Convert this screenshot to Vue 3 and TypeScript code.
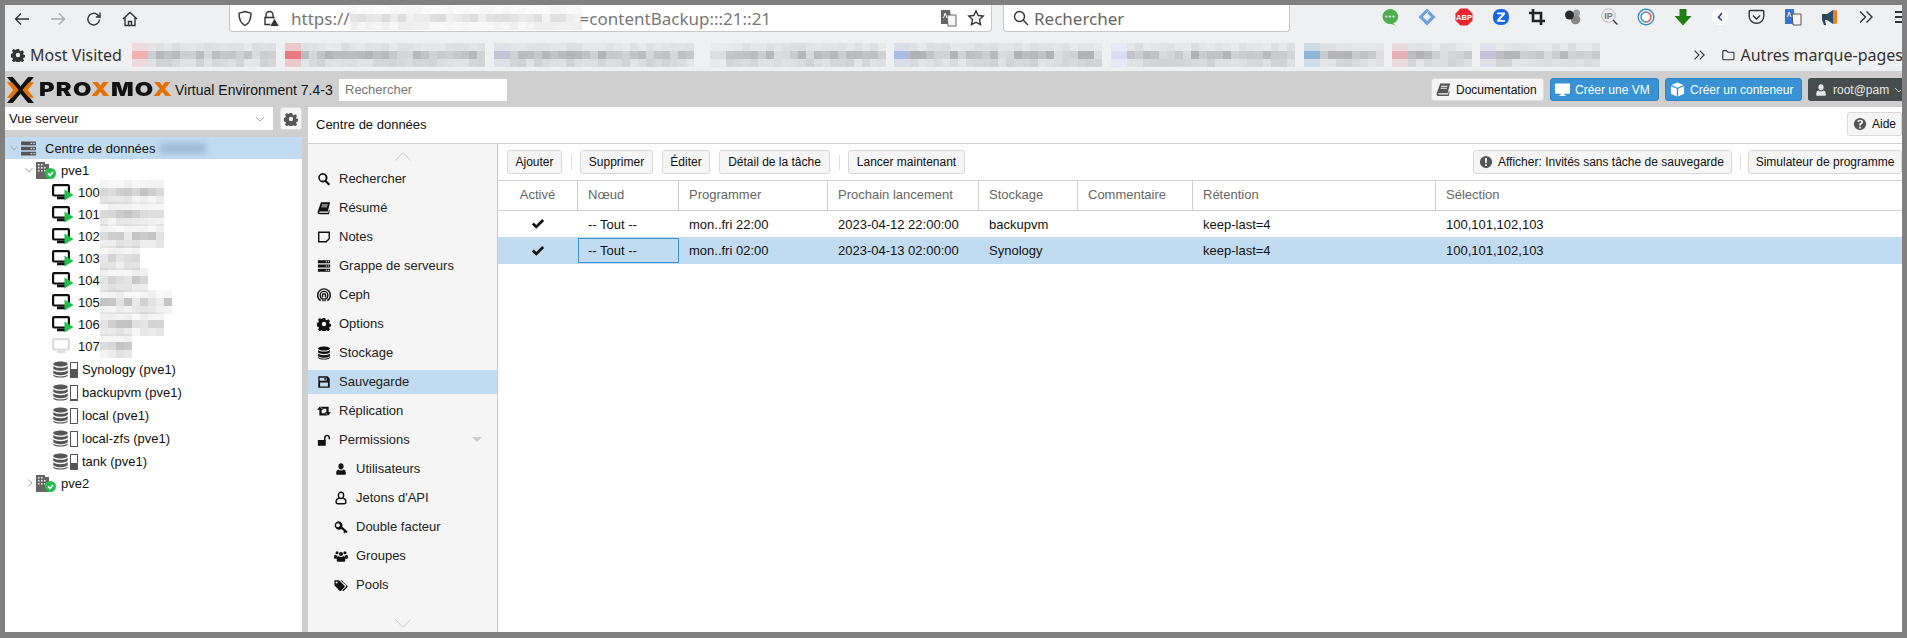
<script setup lang="ts">
import { h } from "vue";

type IconDef = { f?: string; s?: string };

const icons: Record<string, IconDef> = {
  search: { f: "M6.5 1a5.5 5.5 0 0 1 4.4 8.8l4 4-1.7 1.7-4-4A5.5 5.5 0 1 1 6.5 1zm0 2.2a3.3 3.3 0 1 0 0 6.6 3.3 3.3 0 0 0 0-6.6z" },
  book: { f: "M4.5 1.5H15l-2.6 10.6H3.2c-1 0-1 1.2 0 1.2h9.6l.9-3.4 1 .6L13.5 15H2.8C1 15 .3 13.4.9 11.6zM5.5 4v1H12l.3-1zM5 6.2v1h6.4l.3-1z" },
  note: { s: "M2 2.5h12v7.5l-3.5 3.5H2z" },
  server: { f: "M1 1.5h14v3.4H1zM10 2.6v1.2h1.4V2.6zm2.4 0v1.2h1.4V2.6zM1 6.3h14v3.4H1zM10 7.4v1.2h1.4V7.4zm2.4 0v1.2h1.4V7.4zM1 11.1h14v3.4H1zM10 12.2v1.2h1.4v-1.2zm2.4 0v1.2h1.4v-1.2z" },
  ceph: { s: "M4.2 14.500C2 13.200.8 10.900.8 8.200a7.200 7.200 0 0 1 14.400 0c0 2.700-1.200 5-3.400 6.300M5.600 12.500C4.300 11.500 3.600 10 3.600 8.300a4.400 4.400 0 0 1 8.800 0c0 1.700-.7 3.200-2 4.200M6.800 10.500C6.300 10 6.200 9 6.200 8.400a1.800 1.800 0 0 1 3.600 0c0 .6-.1 1.600-.6 2.100M6.800 15V11.500M9.200 15V11.500" },
  cog: { f: "M6.600 1h2.800l.4 2 1.400.6 1.700-1.100 2 2-1.100 1.700.6 1.400 2 .4v2.800l-2 .4-.6 1.400 1.100 1.700-2 2-1.700-1.100-1.400.6-.4 2H6.600l-.4-2-1.400-.6-1.700 1.100-2-2 1.100-1.700-.6-1.400-2-.4V6.600l2-.4.6-1.400-1.100-1.700 2-2 1.700 1.100 1.400-.6zM8 5.500a2.500 2.500 0 1 0 0 5 2.500 2.500 0 0 0 0-5z" },
  db: { f: "M8 .5c3.600 0 6.800 1 6.800 2.300S11.600 5.200 8 5.200 1.200 4.100 1.200 2.800 4.400.5 8 .5zM1.200 4.600c1 1.100 3.900 1.800 6.800 1.800s5.800-.7 6.800-1.800v2.300c0 1.200-3.200 2.300-6.800 2.300S1.200 8.100 1.200 6.900zM1.200 8.700c1 1.100 3.900 1.800 6.800 1.800s5.800-.7 6.800-1.800V11c0 1.200-3.200 2.300-6.800 2.300S1.200 12.200 1.200 11zM1.200 12.700c1 1.100 3.900 1.800 6.800 1.800s5.800-.7 6.800-1.800v.6c0 1.200-3.200 2.200-6.800 2.200s-6.800-1-6.800-2.200z" },
  save: { f: "M1.500 1.500H12L14.500 4v10.500h-13zM3 3v3.600h8V3zM8.500 3.500h1.500v2.500H8.500zM3.500 8.500v4.500h9V8.500z" },
  replicate: { f: "M3.500 2.500L7.500 6.500H5.300V10.500h5.200L12.800 13H2.700V6.500H0zM12.500 13.500L8.500 9.500h2.200V5.500H5.500L3.200 3H13.300v6.500H16z" },
  unlock: { f: "M1 8h9v6.500H1zM8 8V5.500C8 3.500 9.500 2 11.500 2S15 3.500 15 5.500V7h-1.800V5.500c0-1-.7-1.700-1.700-1.700s-1.700.7-1.700 1.700V8z" },
  user: { f: "M8 1.500c1.700 0 3 1.400 3 3.300S9.700 8.500 8 8.500 5 6.700 5 4.800 6.300 1.500 8 1.500zM5 8.500c.8.700 1.800 1.100 3 1.100s2.200-.4 3-1.100c1.800.3 2.500 2 2.500 5 0 .8-.6 1.200-1.300 1.200H3.800c-.7 0-1.300-.4-1.300-1.200 0-3 .7-4.700 2.500-5z" },
  userO: { s: "M8 1.500c1.900 0 3 1.500 3 3.300S9.900 8.500 8 8.500 5 6.600 5 4.800 6.100 1.500 8 1.500zM5.400 8.500c-1.900.4-3 1.700-3 3.800 0 1.600 1 2.200 2 2.200h7.200c1 0 2-.6 2-2.200 0-2.100-1.100-3.400-3-3.800" },
  key: { f: "M5 1.500a4.800 4.800 0 0 1 4.500 6.200l6 5.500-1 1.800-1.500-.9-.8 1.200-1.300-1 .3-1.700-2.800-2.400A4.800 4.800 0 1 1 5 1.500zM4.500 3.800a2.200 2.200 0 1 0 0 4.400 2.200 2.200 0 0 0 0-4.400z" },
  users: { f: "M3.500 2.500a1.800 1.800 0 1 1 0 3.600 1.800 1.800 0 0 1 0-3.600zM12.500 2.500a1.800 1.800 0 1 1 0 3.600 1.800 1.800 0 0 1 0-3.600zM8 3.500a2.300 2.300 0 1 1 0 4.600 2.300 2.300 0 0 1 0-4.600zM0 10c0-2 .6-3.300 1.800-3.300.6.500 1.200.8 2 .7-.4.800-.6 1.700-.6 2.800v.8H1c-.6 0-1-.3-1-1zM16 10c0-2-.6-3.300-1.800-3.300-.6.500-1.200.8-2 .7.400.8.600 1.700.6 2.800v.8H15c.6 0 1-.3 1-1zM5 8c.8.700 1.800 1 3 1s2.200-.3 3-1c1.300.2 1.800 1.500 1.800 3.300v2c0 .8-.5 1.200-1.200 1.200H4.400c-.7 0-1.200-.4-1.200-1.200v-2C3.200 9.500 3.700 8.200 5 8z" },
  tags: { f: "M.5 2.500h5.200L12 8.800c.5.500.5 1.200 0 1.700L8 14.500c-.5.500-1.200.5-1.700 0L.5 8.200zM3 4a1.100 1.100 0 1 0 0 2.200A1.100 1.100 0 0 0 3 4zM7.200 2.500h1.500l6.500 6.300c.5.500.5 1.200 0 1.700l-4 4c-.5.500-1.100.5-1.600 0l-.2-.1 3.900-3.900c.8-.8.8-1.900 0-2.700z" },
  check: { f: "M1 8.500l2.200-2.200L6 9.100l6.800-6.800L15 4.500l-9 9z" },
  warn: { f: "M8 1a7 7 0 1 1 0 14A7 7 0 0 1 8 1zM6.800 3.500l.3 6h1.800l.3-6zM7 10.700v2h2v-2z" },
  help: { f: "M8 1a7 7 0 1 1 0 14A7 7 0 0 1 8 1zM7 11v2h2v-2zM8 3C6.500 3 5.300 3.800 4.800 5l1.500.9C6.700 5.200 7.200 4.700 8 4.700c.8 0 1.300.4 1.300.9 0 .6-.5.9-1.200 1.300C7.300 7.400 7 8 7 9v.8h2v-.5c0-.5.3-.8.9-1.100.9-.6 1.500-1.300 1.500-2.600C11.400 4 9.800 3 8 3z" },
  monitor: { f: "M.5 1.500h15c.3 0 .5.2.5.5v10c0 .3-.2.5-.5.5H10v1.600h1.500V15h-7v-.9H6v-1.600H.5c-.3 0-.5-.2-.5-.5V2c0-.3.2-.5.5-.5z" },
  cube: { f: "M8 .5l6.500 2.800L8 6.100 1.500 3.300zM1 4.400l6.300 2.700V15.500L1 12.600zM15 4.400L8.700 7.100V15.500l6.300-2.900z" }
};

// small render helper so the same svg markup is not repeated for every icon
const Icon = (props: { name: string; size?: number }) => {
  const def = icons[props.name];
  const size = props.size ?? 14;
  const parts = [];
  if (def.f) parts.push(h("path", { d: def.f, fill: "currentColor", "fill-rule": "evenodd" }));
  if (def.s) parts.push(h("path", { d: def.s, fill: "none", stroke: "currentColor", "stroke-width": 1.6 }));
  return h("svg", { viewBox: "0 0 16 16", width: size, height: size, class: "ico" }, parts);
};
Icon.props = ["name", "size"];

// pseudo random grey cells, stands for the pixelated parts of the screenshot
function cells(seed: number, count: number, dark = 0.26) {
  const out: number[] = [];
  let x = seed * 9301 + 49297;
  for (let i = 0; i < count; i++) {
    x = (x * 9301 + 49297) % 233280;
    out.push((0.3 + 0.7 * (x / 233280)) * dark);
  }
  return out;
}

// the middle row of a pixelated text line is the darkest one
const rowWeight = [0.3, 1, 0.5];
function shade(c: number, i: number, cols: number) {
  return `rgba(0,0,0,${(c * rowWeight[Math.floor(i / cols) % 3]).toFixed(3)})`;
}
function markCell(m: Mark, c: number, i: number) {
  if (i % m.cols < 2) return Math.floor(i / m.cols) === 1 ? m.tint : m.tint + "55";
  return shade(c, i, m.cols);
}

type Mark = { gap: number; cols: number; seed: number; tint: string };
const marks: Mark[] = [
  { gap: 10, cols: 18, seed: 3, tint: "#f2b0b0" },
  { gap: 9, cols: 25, seed: 5, tint: "#e57b7f" },
  { gap: 9, cols: 25, seed: 8, tint: "#c4c4d8" },
  { gap: 16, cols: 22, seed: 11, tint: "#dcdfe2" },
  { gap: 8, cols: 26, seed: 14, tint: "#aabcdf" },
  { gap: 9, cols: 23, seed: 17, tint: "#dcdcf5" },
  { gap: 9, cols: 10, seed: 19, tint: "#8fb5d8" },
  { gap: 8, cols: 10, seed: 22, tint: "#e5b0b5" },
  { gap: 8, cols: 15, seed: 25, tint: "#c8c0d4" }
];

const menu = [
  { label: "Rechercher", icon: "search" },
  { label: "Résumé", icon: "book" },
  { label: "Notes", icon: "note" },
  { label: "Grappe de serveurs", icon: "server" },
  { label: "Ceph", icon: "ceph" },
  { label: "Options", icon: "cog" },
  { label: "Stockage", icon: "db" },
  { label: "Sauvegarde", icon: "save", active: true },
  { label: "Réplication", icon: "replicate" },
  { label: "Permissions", icon: "unlock", caret: true },
  { label: "Utilisateurs", icon: "user", sub: true },
  { label: "Jetons d'API", icon: "userO", sub: true },
  { label: "Double facteur", icon: "key", sub: true },
  { label: "Groupes", icon: "users", sub: true },
  { label: "Pools", icon: "tags", sub: true }
];

const vms = [
  { id: 100, cols: 8, seed: 2 },
  { id: 101, cols: 8, seed: 4 },
  { id: 102, cols: 8, seed: 6 },
  { id: 103, cols: 5, seed: 9 },
  { id: 104, cols: 6, seed: 12 },
  { id: 105, cols: 9, seed: 15 },
  { id: 106, cols: 8, seed: 18 },
  { id: 107, cols: 4, seed: 21, off: true }
];

const storages = [
  { label: "Synology (pve1)", level: 8 },
  { label: "backupvm (pve1)", level: 1 },
  { label: "local (pve1)", level: 0 },
  { label: "local-zfs (pve1)", level: 0 },
  { label: "tank (pve1)", level: 6 }
];

const columns = ["Activé", "Nœud", "Programmer", "Prochain lancement", "Stockage", "Commentaire", "Rétention", "Sélection"];
const jobs = [
  { node: "-- Tout --", schedule: "mon..fri 22:00", next: "2023-04-12 22:00:00", store: "backupvm", keep: "keep-last=4", sel: "100,101,102,103" },
  { node: "-- Tout --", schedule: "mon..fri 02:00", next: "2023-04-13 02:00:00", store: "Synology", keep: "keep-last=4", sel: "100,101,102,103", selected: true }
];
</script>

<template>
  <div class="frame">
    <div class="browser">
      <div class="nav-row">
        <div class="nav-btns">
          <svg width="16" height="14" viewBox="0 0 16 14" class="line"><path d="M15 7H1.500M7 1.500L1.500 7 7 12.500" /></svg>
          <svg width="16" height="14" viewBox="0 0 16 14" class="line faded"><path d="M1 7h13.500M9 1.500L14.500 7 9 12.500" /></svg>
          <svg width="16" height="16" viewBox="0 0 16 16" class="line"><path d="M13.500 8.500a5.800 5.800 0 1 1-1.700-4.500L14 6V1.500M14 6H9.800" /></svg>
          <svg width="16" height="16" viewBox="0 0 16 16" class="line"><path d="M1 8l7-6.500L15 8M3 6.500V14.500H13V6.500M6.500 14.500V10.500H9.500V14.500" /></svg>
        </div>
        <div class="url-bar">
          <svg width="16" height="17" viewBox="0 0 16 17" class="line"><path d="M8 1.500l6 1.700c0 6-1.500 10-6 12.300C3.500 13.200 2 9.200 2 3.200z" /></svg>
          <svg width="17" height="17" viewBox="0 0 17 17" class="lock">
            <path class="line-p" d="M3 7.500V5a3.500 3.500 0 0 1 7 0v2.500M2 7.500h9v7H2z" />
            <path d="M11.500 8l5 8.500h-10z" fill="#333" stroke="#f0f0f0" />
          </svg>
          <span class="url-text">https://</span>
          <div class="pix" :style="{ gridTemplateColumns: 'repeat(29, 8px)' }">
            <i v-for="(c, i) in cells(31, 87, 0.14)" :key="i" :style="{ background: shade(c, i, 29) }"></i>
          </div>
          <span class="url-text tail">=contentBackup:::21::21</span>
          <svg width="17" height="18" viewBox="0 0 17 18" class="translate-ico">
            <path d="M1 1h9l2 14H1z" fill="#666" />
            <path d="M7 6h9v11H8z" fill="#f4f4f4" stroke="#666" />
            <path d="M3.500 9l1.700-5 1.700 5M10 9h4M12 14c1-1 1.500-3 1.700-5" fill="none" stroke="#fff" stroke-width="1" />
          </svg>
          <svg width="18" height="18" viewBox="0 0 18 18" class="line star"><path d="M9 1.800l2.200 4.700 5 .6-3.700 3.500 1 5.100L9 13.200l-4.500 2.500 1-5.100L1.800 7.100l5-.6z" /></svg>
        </div>
        <div class="search-bar">
          <svg width="16" height="16" viewBox="0 0 16 16" class="line"><circle cx="6.500" cy="6.500" r="5" /><path d="M10.300 10.300L15 15" /></svg>
          <span>Rechercher</span>
        </div>
        <div class="ext">
          <svg width="18" height="18" viewBox="0 0 18 18"><path d="M9 1a8 7.500 0 0 1 3 14.500l3 2-5-1.500A8 7.500 0 0 1 9 1z" fill="#4cae50" /><circle cx="5.500" cy="8.500" r="1" fill="#fff" /><circle cx="9" cy="8.500" r="1" fill="#fff" /><circle cx="12.500" cy="8.500" r="1" fill="#fff" /></svg>
          <svg width="18" height="18" viewBox="0 0 18 18"><path d="M9 .5L17.500 9 9 17.500 .5 9zM9 5L5 9l4 4 4-4z" fill="#6aa3d8" fill-rule="evenodd" /><path d="M10.500 3.500l-5 5 3 3" fill="none" stroke="#eff0f2" stroke-width="1" /></svg>
          <svg width="18" height="18" viewBox="0 0 18 18"><path d="M5.500 .5h7L17.500 5.500v7L12.500 17.500h-7L.5 12.500v-7z" fill="#e8252f" /><text x="9" y="12" class="abp">ABP</text></svg>
          <svg width="18" height="18" viewBox="0 0 18 18"><rect x="1" y="1" width="16" height="16" rx="7" fill="#1766e8" /><path d="M5 4.500h8v1.800L7.800 12H13v1.800H5V12l5.200-5.700H5z" fill="#fff" /></svg>
          <svg width="16" height="16" viewBox="0 0 16 16"><path d="M4 0v12h12M0 4h12v12" fill="none" stroke="#222" stroke-width="2.600" /></svg>
          <svg width="18" height="18" viewBox="0 0 18 18"><circle cx="11.500" cy="11.500" r="4.800" fill="#888" /><circle cx="12.500" cy="5" r="3.500" fill="#999" /><circle cx="5.500" cy="7" r="4.500" fill="#2a2a2a" /></svg>
          <svg width="18" height="18" viewBox="0 0 18 18"><circle cx="7.500" cy="7.500" r="6.800" fill="#eee" stroke="#bbb" /><text x="7.500" y="11" class="ip">IP</text><path d="M12 12l4.500 4.500" stroke="#444" stroke-width="1.500" /></svg>
          <svg width="18" height="18" viewBox="0 0 18 18"><circle cx="9" cy="9" r="7.800" fill="#fff" stroke="#2f8fc5" stroke-width="1.400" /><path d="M9 4a5 5 0 0 1 0 10" fill="none" stroke="#d9534f" stroke-width="1.400" /><path d="M9 14a5 5 0 0 1 0-10" fill="none" stroke="#2f8fc5" stroke-width="1.400" /></svg>
          <svg width="18" height="18" viewBox="0 0 18 18"><path d="M5.500 1h7v7h5l-8.500 9.500L.5 8h5z" fill="#1f7d14" /></svg>
          <svg width="18" height="18" viewBox="0 0 18 18"><circle cx="9" cy="9" r="8" fill="#fff" /><path d="M11 5L7.500 9.500l3.500 3" fill="none" stroke="#27467d" stroke-width="1.600" /></svg>
          <svg width="17" height="16" viewBox="0 0 17 16" class="line"><path d="M2 1.500h13c.5 0 .8.300.8.800V7a7.300 7.300 0 0 1-14.600 0V2.300c0-.5.300-.8.800-.8z" /><path d="M5 6.500L8.500 10 12 6.500" /></svg>
          <svg width="18" height="18" viewBox="0 0 18 18"><path d="M1 1h9l1 15H1z" fill="#3b73d8" /><path d="M8 6h9v11H9z" fill="#f4f4f4" stroke="#555" /><path d="M3.500 9l1.700-5 1.700 5" fill="none" stroke="#fff" /></svg>
          <svg width="18" height="18" viewBox="0 0 18 18"><path d="M1 6h5v6H4l1 5H3l-2-5z" fill="#2f4858" /><path d="M6 6l6-4v14l-6-4z" fill="#24506d" /><path d="M12 2l4 .5v13l-4 .5z" fill="#f07d20" /></svg>
          <svg width="16" height="14" viewBox="0 0 16 14" class="line"><path d="M2 1.500L7.500 7 2 12.500M8.500 1.500L14 7l-5.500 5.500" /></svg>
          <svg width="16" height="14" viewBox="0 0 16 14" class="line burger"><path d="M2 2h12M2 7h12M2 12h12" /></svg>
        </div>
      </div>
      <div class="marks-row">
        <svg width="14" height="14" viewBox="0 0 16 16" class="mv-cog"><path :d="icons.cog.f" fill-rule="evenodd" fill="#333" /></svg>
        <span class="mv">Most Visited</span>
        <div
          v-for="m in marks"
          :key="m.seed"
          class="pix mark"
          :style="{ marginLeft: m.gap + 'px', gridTemplateColumns: `repeat(${m.cols}, 8px)` }"
        >
          <i
            v-for="(c, i) in cells(m.seed, m.cols * 3)"
            :key="i"
            :style="{ background: markCell(m, c, i) }"
          ></i>
        </div>
        <div class="marks-end">
          <svg width="18" height="16" viewBox="0 0 16 14" class="line"><path d="M2 1.500L7.500 7 2 12.500M8.500 1.500L14 7l-5.500 5.500" /></svg>
          <svg width="18" height="16" viewBox="0 0 16 14" class="line folder"><path d="M1 2.500c0-.6.400-1 1-1h3.500l2 2H14c.6 0 1 .4 1 1V12c0 .6-.4 1-1 1H2c-.6 0-1-.4-1-1z" /></svg>
          <span class="mv">Autres marque-pages</span>
        </div>
      </div>
    </div>

    <header class="pve-head">
      <div class="logo">
        <svg width="27" height="26" viewBox="0 0 30 25" preserveAspectRatio="none">
          <path d="M0 0h6.500L15 9l8.500-9H30L18.500 12.500 30 25h-6.500L15 16l-8.500 9H0l11.500-12.500z" fill="#111" />
          <path d="M0 5h5.500l7.500 7.500L5.500 20H0l7-7.500zM30 5h-5.500L17 12.500 24.500 20H30l-7-7.500z" fill="#e57000" />
        </svg>
        <span class="word">PRO<b>X</b>MO<b>X</b></span>
      </div>
      <span class="ve">Virtual Environment 7.4-3</span>
      <input class="pve-search" placeholder="Rechercher" />
      <div class="head-btns">
        <button class="h-btn light"><Icon name="book" :size="15" />Documentation</button>
        <button class="h-btn blue"><Icon name="monitor" :size="15" />Créer une VM</button>
        <button class="h-btn blue"><Icon name="cube" :size="15" />Créer un conteneur</button>
        <button class="h-btn dark">
          <Icon name="user" :size="14" />root@pam
          <svg width="10" height="6" viewBox="0 0 10 6" class="caret"><path d="M1 1l4 4 4-4" fill="none" stroke="#ccc" /></svg>
        </button>
      </div>
    </header>

    <div class="main">
      <aside class="side">
        <div class="view-row">
          <div class="view-select">
            <span>Vue serveur</span>
            <svg width="10" height="6" viewBox="0 0 10 6"><path d="M1 1l4 4 4-4" fill="none" stroke="#aaa" /></svg>
          </div>
          <button class="gear"><Icon name="cog" :size="14" /></button>
        </div>
        <div class="tree">
          <div class="t-row root">
            <svg class="exp" width="8" height="6" viewBox="0 0 8 6"><path d="M.5 1l3.500 4 3.500-4" /></svg>
            <span class="root-ico"><Icon name="server" :size="17" /></span>
            <span>Centre de données</span>
            <span class="smudge"></span>
          </div>
          <div class="t-row node">
            <svg class="exp" width="8" height="6" viewBox="0 0 8 6"><path d="M.5 1l3.500 4 3.500-4" /></svg>
            <svg width="20" height="17" viewBox="0 0 20 17" class="node-ico">
              <path d="M0 0h9v2h4v15H0z" fill="#666" />
              <path d="M2 2h1.500v1.500H2zM5 2h1.500v1.500H5zM2 5h1.500v1.500H2zM5 5h1.500v1.500H5zM8 5h1.500v1.500H8zM2 8h1.500v1.500H2zM5 8h1.500v1.500H5zM8 8h1.500v1.500H8z" fill="#eee" />
              <circle cx="14.500" cy="11.500" r="5.500" fill="#21bf4b" />
              <path d="M12 11.500l2 2 3-3.500" fill="none" stroke="#fff" stroke-width="1.600" />
            </svg>
            <span>pve1</span>
          </div>
          <div v-for="vm in vms" :key="vm.id" class="t-row vm">
            <svg width="22" height="17" viewBox="0 0 22 17" class="vm-ico" :class="{ off: vm.off }">
              <rect x="1.100" y="1.100" width="15.800" height="10.400" rx="1" class="scr" />
              <path d="M5 12.500h8.500v2.800H5z" class="foot" />
              <path v-if="!vm.off" d="M12.500 5.500L21.500 11l-9 5.500z" fill="#21bf4b" />
            </svg>
            <span class="vm-id">{{ vm.id }}</span>
            <div class="pix" :style="{ gridTemplateColumns: `repeat(${vm.cols}, 8px)` }">
              <i v-for="(c, i) in cells(vm.seed, vm.cols * 3, 0.24)" :key="i" :style="{ background: shade(c, i, vm.cols) }"></i>
            </div>
          </div>
          <div v-for="s in storages" :key="s.label" class="t-row store">
            <span class="db-ico"><Icon name="db" :size="17" /></span>
            <span class="level"><i :style="{ height: s.level + 'px' }"></i></span>
            <span>{{ s.label }}</span>
          </div>
          <div class="t-row node last">
            <svg class="exp" width="6" height="8" viewBox="0 0 6 8"><path d="M1 .5l4 3.500-4 3.500" /></svg>
            <svg width="20" height="17" viewBox="0 0 20 17" class="node-ico">
              <path d="M0 0h9v2h4v15H0z" fill="#666" />
              <path d="M2 2h1.500v1.500H2zM5 2h1.500v1.500H5zM2 5h1.500v1.500H2zM5 5h1.500v1.500H5zM8 5h1.500v1.500H8zM2 8h1.500v1.500H2zM5 8h1.500v1.500H5zM8 8h1.500v1.500H8z" fill="#eee" />
              <circle cx="14.500" cy="11.500" r="5.500" fill="#21bf4b" />
              <path d="M12 11.500l2 2 3-3.500" fill="none" stroke="#fff" stroke-width="1.600" />
            </svg>
            <span>pve2</span>
          </div>
        </div>
      </aside>

      <section class="content">
        <div class="title-bar">
          <span class="title">Centre de données</span>
          <button class="btn aide"><span class="grey"><Icon name="help" :size="14" /></span>Aide</button>
        </div>
        <div class="body">
          <nav class="menu">
            <div class="scroll">
              <svg width="16" height="9" viewBox="0 0 16 9"><path d="M.5 8.500L8 .5l7.500 8" /></svg>
            </div>
            <div class="items">
              <div v-for="m in menu" :key="m.label" class="item" :class="{ active: m.active, sub: m.sub }">
                <Icon :name="m.icon" :size="14" />
                <span>{{ m.label }}</span>
                <i v-if="m.caret" class="tri"></i>
              </div>
            </div>
            <div class="scroll down">
              <svg width="16" height="9" viewBox="0 0 16 9"><path d="M.5 .5L8 8.500l7.500-8" /></svg>
            </div>
          </nav>
          <div class="panel">
            <div class="toolbar">
              <button class="btn b-add">Ajouter</button>
              <i class="sep"></i>
              <button class="btn b-del">Supprimer</button>
              <button class="btn b-edit">Éditer</button>
              <button class="btn b-task">Détail de la tâche</button>
              <i class="sep"></i>
              <button class="btn b-run">Lancer maintenant</button>
              <div class="tb-right">
                <button class="btn icon-btn"><span class="grey"><Icon name="warn" :size="14" /></span>Afficher: Invités sans tâche de sauvegarde</button>
                <i class="sep"></i>
                <button class="btn b-sim">Simulateur de programme</button>
              </div>
            </div>
            <div class="grid g-head">
              <div v-for="c in columns" :key="c" class="cell"><span class="h-label">{{ c }}</span></div>
            </div>
            <div v-for="job in jobs" :key="job.next" class="grid g-row" :class="{ selected: job.selected }">
              <div class="cell center"><Icon name="check" :size="14" /></div>
              <div class="cell" :class="{ focus: job.selected }">{{ job.node }}</div>
              <div class="cell">{{ job.schedule }}</div>
              <div class="cell">{{ job.next }}</div>
              <div class="cell">{{ job.store }}</div>
              <div class="cell"></div>
              <div class="cell">{{ job.keep }}</div>
              <div class="cell">{{ job.sel }}</div>
            </div>
          </div>
        </div>
      </section>
    </div>
  </div>
</template>

<style>
html, body { margin: 0; background: #808080; overflow: hidden; }
</style>

<style scoped>
.frame {
  width: 1907px;
  height: 638px;
  box-sizing: border-box;
  padding: 5px 5px 6px;
  background: #808080;
  display: flex;
  flex-direction: column;
  overflow: hidden;
  font-family: "Liberation Sans", Arial, sans-serif;
  font-size: 13px;
  color: #111;
}
.ico { display: block; flex: none; }
.line, .line-p { fill: none; stroke: #333; stroke-width: 1.400; }
.faded { stroke: #aaa; }

.browser {
  height: 67px;
  flex: none;
  background: #eff0f2;
  border-bottom: 1px solid #d0d0d3;
  box-sizing: border-box;
  font-family: "Noto Sans", sans-serif;
}
.nav-row { height: 33px; display: flex; position: relative; overflow: hidden; }
.nav-btns { width: 224px; flex: none; padding: 0 0 6px 9px; box-sizing: border-box; display: flex; align-items: center; gap: 20px; }
.url-bar {
  width: 763px;
  height: 27px;
  flex: none;
  box-sizing: border-box;
  background: #fff;
  border: 1px solid #c8c8ca;
  border-top: 0;
  border-radius: 0 0 4px 4px;
  display: flex;
  align-items: center;
  padding-left: 7px;
}
.lock { margin-left: 10px; }
.url-text { font-size: 17px; color: #777; margin-left: 11px; white-space: nowrap; }
.url-text.tail { margin-left: -2px; }
.translate-ico { margin-left: auto; }
.star { margin: 0 6px 0 10px; }
.search-bar {
  width: 287px;
  height: 27px;
  flex: none;
  box-sizing: border-box;
  margin-left: 11px;
  background: #fff;
  border: 1px solid #c8c8ca;
  border-top: 0;
  border-radius: 0 0 4px 4px;
  display: flex;
  align-items: center;
  gap: 5px;
  padding-left: 9px;
  font-size: 17px;
  color: #666;
}
.ext {
  flex: 1;
  display: flex;
  align-items: center;
  justify-content: space-between;
  padding: 0 0 9px 91px;
  margin-right: -7px;
  box-sizing: border-box;
  min-width: 0;
}
.ext svg { flex: none; }
.abp { font: bold 7.500px "Liberation Sans", sans-serif; fill: #fff; text-anchor: middle; }
.ip { font: bold 9px "Liberation Sans", sans-serif; fill: #777; text-anchor: middle; }
.burger { stroke-width: 1.800; }

.marks-row { height: 33px; display: flex; align-items: center; padding-left: 6px; overflow: hidden; position: relative; }
.mv-cog { flex: none; margin-right: 5px; }
.mv { font-size: 16px; color: #333; white-space: nowrap; }
.pix { display: grid; grid-auto-rows: 8px; flex: none; }
.pix i { display: block; }
.marks-end {
  margin-left: auto;
  flex: none;
  display: flex;
  align-items: center;
  background: #eff0f2;
  gap: 6px;
  margin-right: -1px;
  width: 210px;
  overflow: hidden;
}
.folder { margin-left: 10px; }

.pve-head {
  height: 35px;
  flex: none;
  background: #cfcfcf;
  display: flex;
  align-items: center;
  position: relative;
}
.logo { display: flex; align-items: center; margin-left: 2px; width: 168px; flex: none; }
.word {
  font: 900 19px "Inter", sans-serif;
  color: #111;
  margin-left: 5px;
  letter-spacing: 1px;
  transform: scaleX(1.25);
  transform-origin: left center;
}
.word b { color: #e57000; font-weight: 900; }
.ve { font-size: 14px; color: #111; white-space: nowrap; width: 164px; flex: none; }
.pve-search {
  width: 168px;
  height: 22px;
  box-sizing: border-box;
  border: 0;
  outline: 0;
  padding: 0 6px;
  font: 13px "Liberation Sans", sans-serif;
  background: #fff;
}
.pve-search::placeholder { color: #777; }
.head-btns { margin-left: auto; display: flex; gap: 6px; height: 23px; }
.h-btn {
  font: 12px "Liberation Sans", sans-serif;
  height: 23px;
  display: flex;
  align-items: center;
  gap: 5px;
  padding: 0 4px;
  border: 1px solid transparent;
  border-radius: 3px;
  white-space: nowrap;
  box-sizing: border-box;
}
.light { background: #f5f5f5; border-color: #ddd; color: #111; width: 113px; }
.light .ico { color: #555; }
.blue { background: #3892d4; border-color: #2f82c0; color: #fff; }
.blue:nth-child(2) { width: 109px; }
.blue:nth-child(3) { width: 137px; }
.dark { background: #464d4d; color: #e8e8e8; width: 94px; border-radius: 3px 0 0 3px; padding-left: 5px; overflow: hidden; }
.caret { flex: none; }

.main { flex: 1; min-height: 0; display: flex; background: #cfcfcf; }
.side { width: 297px; flex: none; display: flex; flex-direction: column; }
.view-row { height: 23px; display: flex; margin-bottom: 7px; flex: none; }
.view-select {
  width: 268px;
  background: #fff;
  display: flex;
  align-items: center;
  justify-content: space-between;
  padding: 0 8px 0 4px;
  box-sizing: border-box;
}
.gear {
  margin-left: 7px;
  width: 22px;
  height: 23px;
  padding: 0;
  background: #f5f5f5;
  border: 1px solid #ddd;
  border-radius: 3px;
  color: #555;
  display: flex;
  align-items: center;
  justify-content: center;
}
.tree { flex: 1; background: #fff; }
.t-row { display: flex; align-items: center; height: 22px; white-space: nowrap; }
.exp { fill: none; stroke: #aaa; flex: none; }
.root { background: #c1dbf0; padding-left: 5px; }
.root-ico { margin-left: 2px; margin-right: 8px; color: #555; }
.smudge {
  width: 46px;
  height: 11px;
  margin-left: 4px;
  background: #9fbbd6;
  filter: blur(3px);
}
.node { padding-left: 20px; }
.node.last { margin-top: -1px; }
.node.last .exp { margin-left: 2px; }
.node-ico { margin-left: 3px; margin-right: 5px; flex: none; }
.vm { padding-left: 47px; }
.vm-ico { flex: none; margin-right: 4px; }
.scr { fill: #fff; stroke: #111; stroke-width: 2.200; }
.foot { fill: #111; }
.off .scr { stroke: #dcdcdc; }
.off .foot { fill: #dcdcdc; }
.vm-id { width: 22px; flex: none; }
.store { padding-left: 47px; height: 23px; }
.vm + .store { margin-top: 1px; }
.db-ico { color: #555; }
.level {
  width: 8px;
  height: 16px;
  margin: 0 4px 0 1px;
  border: 1px solid #555;
  box-sizing: border-box;
  display: flex;
  flex-direction: column;
  justify-content: flex-end;
  flex: none;
}
.level i { display: block; background: #555; }

.content { margin-left: 6px; flex: 1; min-width: 0; display: flex; flex-direction: column; background: #fff; }
.title-bar {
  height: 37px;
  flex: none;
  box-sizing: border-box;
  border-bottom: 1px solid #cfcfcf;
  padding-left: 8px;
  display: flex;
  align-items: center;
  justify-content: space-between;
}
.title { margin-bottom: 2px; }
.btn {
  font: 12px "Liberation Sans", sans-serif;
  color: #111;
  height: 24px;
  box-sizing: border-box;
  padding: 0;
  background: #f5f5f5;
  border: 1px solid #d9d9d9;
  border-radius: 3px;
  display: flex;
  align-items: center;
  justify-content: center;
  gap: 5px;
  white-space: nowrap;
}
.grey { color: #555; }
.aide { width: 55px; margin-bottom: 2px; justify-content: flex-start; padding-left: 5px; }
.icon-btn { width: 259px; justify-content: flex-start; padding-left: 5px; }
.b-add { width: 55px; }
.b-del { width: 73px; }
.b-edit { width: 48px; }
.b-task { width: 111px; }
.b-run { width: 117px; }
.b-sim { width: 154px; }

.body { flex: 1; min-height: 0; display: flex; }
.menu {
  width: 190px;
  flex: none;
  box-sizing: border-box;
  background: #f5f5f5;
  border-right: 1px solid #c8c8c8;
  display: flex;
  flex-direction: column;
  padding-right: 0;
}
.scroll { height: 23px; display: flex; justify-content: center; padding-top: 8px; box-sizing: border-box; flex: none; }
.scroll svg { fill: none; stroke: #c9c9c9; }
.scroll.down { margin-top: auto; height: 21px; padding-top: 8px; }
.items { display: flex; flex-direction: column; gap: 5px; }
.item { height: 24px; display: flex; align-items: center; gap: 8px; padding-left: 9px; position: relative; color: #222; }
.item span { margin-bottom: 2px; }
.item .ico { color: #111; }
.item.sub { padding-left: 26px; }
.item.active { background: #c1dbf0; }
.tri {
  position: absolute;
  left: 164px;
  top: 9px;
  border: 5px solid transparent;
  border-top: 5px solid #ccc;
}

.panel { flex: 1; min-width: 0; display: flex; flex-direction: column; }
.toolbar {
  height: 37px;
  flex: none;
  box-sizing: border-box;
  border-bottom: 1px solid #cfcfcf;
  display: flex;
  align-items: center;
  padding-left: 9px;
  gap: 9px;
}
.sep { width: 1px; height: 15px; background: #ddd; display: block; margin-right: -1px; }
.tb-right { margin-left: auto; display: flex; align-items: center; gap: 8px; }

.grid { display: grid; grid-template-columns: 80px 101px 149px 151px 99px 115px 243px 1fr; }
.g-head { height: 29px; border-bottom: 1px solid #cfcfcf; color: #666; flex: none; }
.g-head .cell { border-right: 1px solid #cfcfcf; padding-left: 10px; display: flex; align-items: center; box-sizing: border-box; }
.g-head .cell:first-child { justify-content: center; padding-left: 0; }
.g-head .cell:last-child { border-right: 0; }
.h-label { margin-bottom: 2px; }
.g-row { height: 26px; flex: none; color: #111; }
.g-row .cell { display: flex; align-items: center; padding-left: 10px; box-sizing: border-box; }
.g-row .cell.center { justify-content: center; padding-left: 0; }
.g-row.selected { background: #c1dbf0; height: 27px; }
.focus { outline: 1px solid #3892d4; outline-offset: -1px; margin: 1px 0; }
</style>
